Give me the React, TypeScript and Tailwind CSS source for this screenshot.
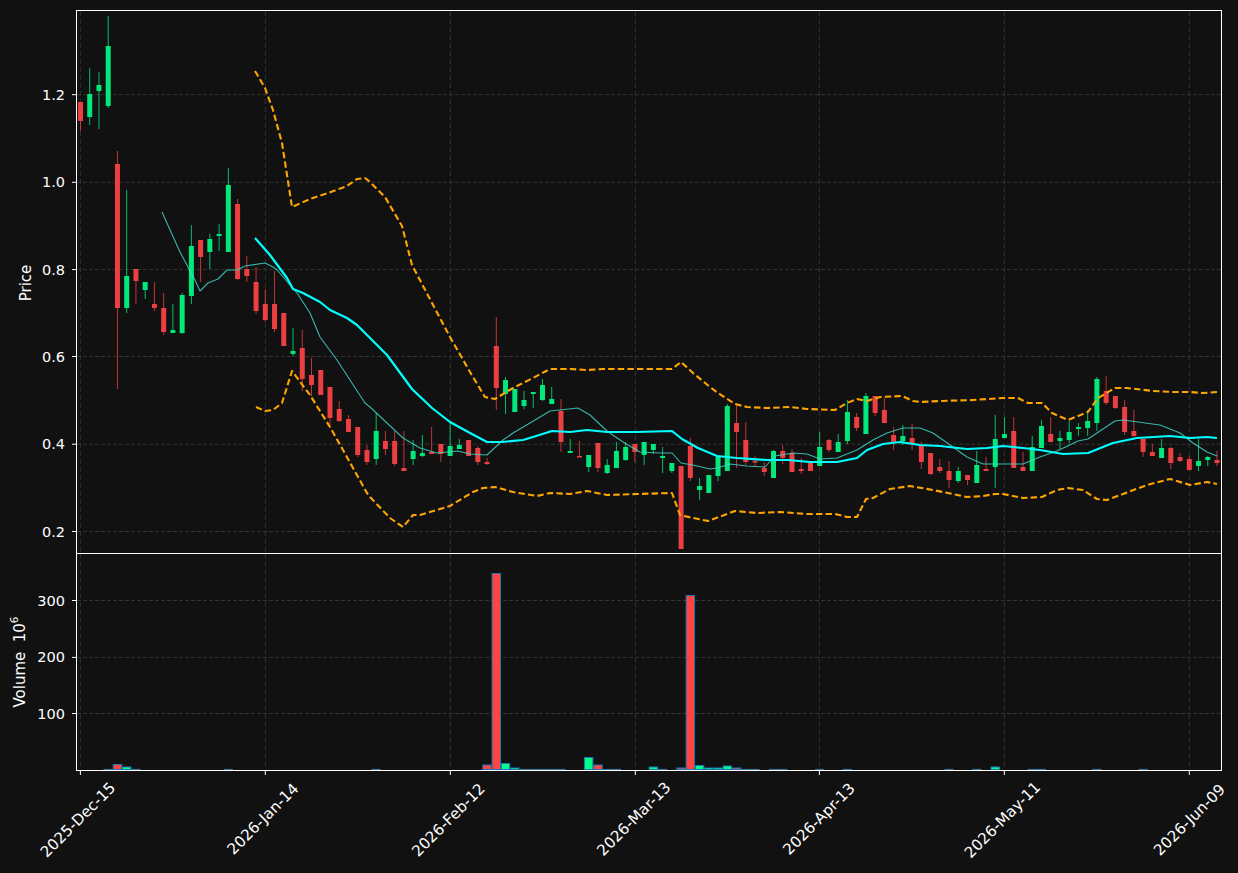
import React from 'react';

// wick top, wick bottom, body top, body bottom, colour (pixel rows of the price panel)
type Candle = [number, number, number, number, 'r' | 'g'];

const candles: Candle[] = [
  [102, 131, 102, 121, 'r'], [68, 125, 94, 117, 'g'], [72, 129, 85, 91, 'g'], [16, 108, 46, 106, 'g'],
  [151, 389, 164, 308, 'r'], [190, 313, 276, 308, 'g'], [269, 304, 269, 281, 'r'], [282, 299, 282, 290, 'g'],
  [282, 311, 304, 308, 'r'], [293, 335, 308, 332, 'r'], [304, 333, 330, 333, 'g'], [293, 334, 295, 333, 'g'],
  [225, 304, 246, 296, 'g'], [240, 282, 240, 257, 'r'], [234, 269, 239, 252, 'g'], [224, 251, 234, 236, 'g'],
  [168, 252, 185, 252, 'g'], [199, 280, 204, 279, 'r'], [256, 282, 269, 276, 'r'], [267, 314, 282, 311, 'r'],
  [289, 322, 304, 320, 'r'], [271, 332, 304, 329, 'r'], [313, 346, 313, 346, 'r'], [328, 356, 351, 354, 'g'],
  [330, 391, 348, 379, 'r'], [358, 396, 375, 385, 'r'], [370, 395, 370, 395, 'r'], [387, 425, 387, 418, 'r'],
  [401, 422, 409, 421, 'r'], [415, 432, 419, 432, 'r'], [427, 457, 427, 455, 'r'], [445, 465, 450, 462, 'r'],
  [413, 465, 431, 459, 'g'], [431, 455, 441, 449, 'r'], [431, 466, 441, 464, 'r'], [431, 471, 468, 471, 'r'],
  [440, 465, 451, 459, 'g'], [435, 457, 453, 456, 'g'], [427, 454, 452, 454, 'r'], [444, 462, 444, 454, 'r'],
  [422, 456, 446, 456, 'g'], [439, 449, 445, 449, 'g'], [440, 456, 440, 456, 'r'], [446, 465, 448, 462, 'r'],
  [458, 465, 462, 464, 'r'], [317, 410, 346, 388, 'r'], [377, 414, 380, 394, 'g'], [389, 412, 389, 412, 'g'],
  [391, 409, 400, 406, 'g'], [392, 408, 392, 394, 'g'], [379, 401, 385, 400, 'g'], [387, 404, 399, 404, 'g'],
  [399, 452, 411, 442, 'r'], [439, 453, 451, 453, 'g'], [441, 457, 456, 457, 'r'], [455, 472, 455, 467, 'g'],
  [443, 472, 443, 468, 'r'], [459, 474, 465, 473, 'g'], [442, 468, 451, 468, 'g'], [442, 461, 447, 460, 'g'],
  [444, 462, 444, 452, 'r'], [442, 465, 442, 455, 'g'], [444, 454, 444, 450, 'g'], [447, 473, 456, 458, 'g'],
  [463, 473, 463, 471, 'g'], [466, 549, 466, 549, 'r'], [438, 481, 446, 478, 'r'], [478, 500, 486, 490, 'g'],
  [475, 493, 475, 493, 'g'], [457, 481, 457, 476, 'g'], [404, 471, 406, 471, 'g'], [405, 468, 423, 432, 'r'],
  [422, 465, 440, 462, 'r'], [456, 466, 461, 462, 'r'], [462, 476, 468, 472, 'r'], [450, 478, 451, 478, 'g'],
  [445, 464, 451, 458, 'r'], [449, 472, 453, 472, 'r'], [458, 474, 469, 471, 'r'], [463, 471, 463, 471, 'r'],
  [432, 466, 447, 466, 'g'], [439, 452, 440, 450, 'r'], [434, 452, 442, 452, 'g'], [400, 444, 412, 441, 'g'],
  [413, 431, 417, 428, 'r'], [393, 434, 396, 434, 'g'], [396, 416, 396, 413, 'r'], [398, 423, 410, 423, 'r'],
  [427, 450, 435, 442, 'r'], [425, 445, 436, 441, 'g'], [424, 450, 438, 443, 'r'], [442, 469, 446, 462, 'r'],
  [453, 475, 453, 474, 'r'], [459, 473, 467, 471, 'r'], [461, 488, 471, 480, 'r'], [467, 483, 471, 481, 'g'],
  [475, 485, 475, 480, 'r'], [451, 483, 465, 483, 'g'], [457, 471, 469, 471, 'r'], [415, 488, 439, 467, 'g'],
  [417, 438, 434, 438, 'g'], [417, 468, 431, 468, 'r'], [452, 471, 467, 471, 'r'], [436, 471, 447, 471, 'g'],
  [420, 448, 426, 448, 'g'], [417, 442, 434, 442, 'r'], [431, 449, 438, 441, 'g'], [421, 443, 432, 440, 'g'],
  [423, 436, 427, 429, 'g'], [410, 436, 421, 428, 'g'], [377, 431, 379, 423, 'g'], [376, 405, 391, 403, 'r'],
  [396, 409, 396, 408, 'r'], [400, 435, 407, 432, 'r'], [410, 437, 431, 436, 'r'], [439, 457, 439, 452, 'r'],
  [444, 456, 452, 456, 'r'], [439, 458, 448, 458, 'g'], [447, 469, 448, 463, 'r'], [453, 462, 457, 461, 'r'],
  [456, 470, 459, 470, 'r'], [439, 471, 461, 466, 'g'], [456, 466, 457, 460, 'g'], [451, 466, 460, 463, 'r'],
];

const candleX = (i: number) => 80.5 + i * 9.24;

const maFast =
  '162,212 180,252 195,280 200,291 208,283 218,279 227,270 237,270 245,266 265,263 273,267 277,270 297,293 310,313 320,337 337,360 350,380 365,403 370,407 387,423 403,438 420,448 437,453 458,451 470,454 487,455 503,440 513,433 530,423 550,411 578,408 590,415 607,431 623,442 640,452 660,453 672,453 681,463 693,465 710,469 717,468 730,464 747,466 765,467 775,456 793,453 807,454 820,459 837,458 857,450 873,440 887,433 903,428 920,428 933,433 953,447 967,457 983,464 1023,464 1040,457 1057,451 1078,441 1088,439 1115,421 1123,420 1160,425 1180,433 1193,443 1207,452 1217,456';

const maSlow =
  '255,238 270,255 287,278 293,289 303,293 320,302 330,310 347,318 357,325 370,338 387,355 412,389 432,408 450,422 470,433 487,442 502,442 523,440 533,437 552,431 570,432 587,430 607,432 637,432 672,431 682,439 698,448 717,456 737,458 767,460 788,460 810,462 837,462 857,458 867,450 883,444 900,442 920,445 940,446 967,449 987,448 1003,446 1023,448 1040,450 1063,454 1088,453 1113,443 1137,438 1170,436 1190,438 1207,437 1217,438';

const bandUpper =
  '255,71 265,88 273,110 282,143 292,207 310,199 328,193 347,186 357,179 365,178 370,182 385,197 402,226 412,265 432,303 450,337 470,372 485,397 495,399 513,388 533,378 550,369 570,369 587,370 603,369 637,369 672,369 681,362 693,373 710,387 718,393 735,404 747,407 767,408 790,407 807,409 835,410 847,403 857,399 867,401 880,397 902,396 913,401 920,402 940,401 973,400 1003,398 1018,398 1028,403 1042,403 1052,413 1068,420 1088,412 1098,398 1115,388 1127,388 1153,391 1173,392 1190,392 1203,393 1217,392';

const bandLower =
  '256,407 265,411 273,410 282,403 292,371 310,395 330,427 343,450 353,468 367,493 370,497 390,518 403,527 413,515 420,515 440,509 450,506 473,492 483,488 495,487 513,492 537,496 550,493 570,494 587,491 607,495 637,494 672,493 680,515 693,518 708,521 735,511 757,513 780,512 807,514 835,514 847,517 857,517 866,499 873,498 890,489 910,486 933,490 967,497 983,496 995,494 1003,494 1023,498 1042,497 1057,490 1068,488 1083,490 1097,499 1107,500 1123,494 1147,485 1170,479 1190,485 1207,482 1217,484';

// candle index, top pixel row, colour; a top of 769 is a bar too low to show more than its edge
const volumes: [number, number, 'r' | 'g'][] = [
  [3, 769, 'g'], [4, 764.5, 'r'], [5, 767, 'g'], [6, 769, 'r'], [16, 769, 'g'], [32, 769, 'g'],
  [44, 765, 'r'], [45, 573.5, 'r'], [46, 763.5, 'g'], [47, 768, 'g'], [48, 769, 'g'], [49, 769, 'g'],
  [50, 769, 'g'], [51, 769, 'g'], [52, 769, 'r'], [55, 757.5, 'g'], [56, 765, 'r'], [57, 769, 'g'],
  [58, 769, 'g'], [62, 767, 'g'], [63, 769, 'g'], [65, 768, 'r'], [66, 595.5, 'r'], [67, 765.5, 'g'],
  [68, 768, 'g'], [69, 768, 'g'], [70, 766, 'g'], [71, 768, 'r'], [72, 769, 'r'], [73, 769, 'r'],
  [75, 769, 'g'], [76, 769, 'r'], [80, 769, 'g'], [83, 769, 'g'], [94, 769, 'r'], [97, 769, 'g'],
  [99, 767, 'g'], [103, 769, 'g'], [104, 769, 'g'], [110, 769, 'g'], [115, 769, 'r'],
];

const gridX = [80.4, 265.3, 450.3, 635.3, 819.4, 1004.3, 1189.3];
const priceTicks: [string, number][] = [['1.2', 94.7], ['1.0', 182.3], ['0.8', 269.6], ['0.6', 356.5], ['0.4', 444.2], ['0.2', 531.5]];
const volumeTicks: [string, number][] = [['300', 600.5], ['200', 657.4], ['100', 713.5]];
const dates: [string, number, number][] = [
  ['2025-Dec-15', 78, 821], ['2026-Jan-14', 263, 820], ['2026-Feb-12', 448.5, 821], ['2026-Mar-13', 634, 820],
  ['2026-Apr-13', 819, 820], ['2026-May-11', 1002.5, 821], ['2026-Jun-09', 1189.5, 821],
];

function Grid({ top, bottom, ticks }: { top: number; bottom: number; ticks: [string, number][] }) {
  return (
    <g>
      {gridX.map(x => (
        <line key={x} x1={x} x2={x} y1={top} y2={bottom} stroke="#333333" strokeWidth="1" strokeDasharray="5 3" />
      ))}
      {ticks.map(([label, y]) => (
        <g key={label}>
          <line x1={77} x2={1221} y1={y} y2={y} stroke="#333333" strokeWidth="1" strokeDasharray="4 2" />
          <line x1={72} x2={77} y1={y} y2={y} stroke="#ffffff" strokeWidth="1" />
          <text x={65} y={y} textAnchor="end" dominantBaseline="central" fontSize="14.5" fill="#ffffff">
            {label}
          </text>
        </g>
      ))}
    </g>
  );
}

function PricePanel() {
  return (
    <div className="ml-[76px] w-[1146px] h-[544px] border border-white">
      <svg viewBox="77 11 1144 542" className="block w-[1144px] h-[542px] overflow-visible">
        <Grid top={11} bottom={553} ticks={priceTicks} />
        <text transform="rotate(-90 26 283)" x={26} y={283} textAnchor="middle" dominantBaseline="central" fontSize="15" fill="#ffffff">
          Price
        </text>
        {candles.map(([wt, wb, bt, bb, c], i) => {
          const x = candleX(i);
          const color = c === 'r' ? '#ec3f42' : '#02e87b';
          return (
            <g key={i} fill={color} stroke={color}>
              <line x1={x} x2={x} y1={wt} y2={wb} strokeWidth="0.8" />
              <rect x={x - 2.5} y={bt} width={5} height={Math.max(bb - bt, 1.5)} stroke="none" />
            </g>
          );
        })}
        <polyline points={bandUpper} fill="none" stroke="#ffa500" strokeWidth="2.1" strokeDasharray="6.4 3.2" strokeLinejoin="round" />
        <polyline points={bandLower} fill="none" stroke="#ffa500" strokeWidth="2.1" strokeDasharray="6.4 3.2" strokeLinejoin="round" />
        <polyline points={maFast} fill="none" stroke="#40e0d0" strokeOpacity="0.8" strokeWidth="1.1" strokeLinejoin="round" />
        <polyline points={maSlow} fill="none" stroke="#00ffff" strokeWidth="2.2" strokeLinejoin="round" />
      </svg>
    </div>
  );
}

function VolumePanel() {
  return (
    <div className="ml-[76px] -mt-px w-[1146px] h-[218px] border border-white">
      <svg viewBox="77 554 1144 216" className="block w-[1144px] h-[216px] overflow-visible">
        <Grid top={554} bottom={770} ticks={volumeTicks} />
        <text transform="rotate(-90 20 662)" x={20} y={662} textAnchor="middle" dominantBaseline="central" fontSize="15" fill="#ffffff">
          Volume{'\u00a0\u00a0'}10
          <tspan fontSize="10.5" dy="-6">6</tspan>
        </text>
        {volumes.map(([i, top, c]) =>
          top >= 769 ? (
            <line key={i} x1={candleX(i) - 4.6} x2={candleX(i) + 4.6} y1={769.4} y2={769.4} stroke="#4a9bcf" strokeWidth="0.8" />
          ) : (
            <rect
              key={i}
              x={candleX(i) - 4.2}
              y={top}
              width={8.4}
              height={769.5 - top}
              fill={c === 'r' ? '#ff4444' : '#00ff88'}
              stroke="#1f77b4"
              strokeWidth="1"
            />
          ),
        )}
        {gridX.map(x => (
          <line key={x} x1={x} x2={x} y1={770} y2={775} stroke="#ffffff" strokeWidth="1" />
        ))}
      </svg>
    </div>
  );
}

function DateAxis() {
  return (
    <svg viewBox="0 772 1238 101" className="block w-[1238px] h-[101px]">
      {dates.map(([label, x, y]) => (
        <text key={label} transform={`rotate(-45 ${x} ${y})`} x={x} y={y} textAnchor="middle" dominantBaseline="central" fontSize="15.2" fill="#ffffff">
          {label}
        </text>
      ))}
    </svg>
  );
}

export default function App() {
  return (
    <div className="w-[1238px] h-[873px] overflow-hidden bg-[#111111] pt-[10px] font-['DejaVu_Sans',sans-serif]">
      <PricePanel />
      <VolumePanel />
      <DateAxis />
    </div>
  );
}
